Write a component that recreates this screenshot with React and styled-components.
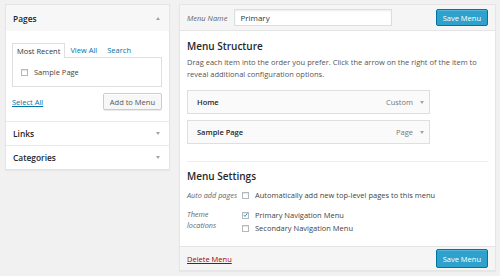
import React from "react";
import styled, { createGlobalStyle } from "styled-components";

const Global = createGlobalStyle`
  html, body { margin: 0; padding: 0; background: #f1f1f1; }
  body { font-family: "Open Sans", "Noto Sans", sans-serif; color: #444; }
  * { box-sizing: border-box; }
`;

const Page = styled.div`
  display: flex;
  align-items: flex-start;
  gap: 9px;
  padding: 4px 4px 0 5px;
  width: 500px;
  height: 276px;
`;

const Side = styled.div`
  width: 165px;
  background: #fff;
  border: 1px solid #e5e5e5;
  box-shadow: 0 1px 1px rgba(0, 0, 0, 0.04);
`;

const SectionHead = styled.div`
  height: ${(p) => (p.$open ? 26 : 24)}px;
  display: flex;
  align-items: center;
  justify-content: space-between;
  padding: 0 9px 0 7px;
  background: ${(p) => (p.$open ? "#f7f7f7" : "#fff")};
  border-top: ${(p) => (p.$first ? "none" : "1px solid #eaeaea")};
  font-size: 8.4px;
  font-weight: 600;
  color: #23282d;
`;

const Tri = styled.span`
  width: 0;
  height: 0;
  border-left: 2.5px solid transparent;
  border-right: 2.5px solid transparent;
  ${(p) =>
    p.$up
      ? "border-bottom: 3px solid #a0a5aa;"
      : "border-top: 3px solid #a0a5aa;"}
`;

const SectionBody = styled.div`
  padding: 12px 7px 11px 6px;
`;

const Tabs = styled.div`
  display: flex;
  align-items: flex-end;
  height: 14px;
  font-size: 7.5px;
`;

const Tab = styled.div`
  height: ${(p) => (p.$active ? 15 : 14)}px;
  display: flex;
  align-items: center;
  padding: 0 ${(p) => (p.$active ? 4 : 5)}px;
  color: ${(p) => (p.$active ? "#32373c" : "#0073aa")};
  background: ${(p) => (p.$active ? "#fff" : "transparent")};
  border: ${(p) => (p.$active ? "1px solid #dfdfdf" : "none")};
  border-bottom: none;
  margin-bottom: ${(p) => (p.$active ? -1 : 0)}px;
  position: relative;
  z-index: 1;
`;

const TabPanel = styled.div`
  height: 30px;
  border: 1px solid #dfdfdf;
  display: flex;
  align-items: center;
  padding-left: 8px;
  gap: 6px;
  font-size: 7.5px;
  color: #444;
`;

const Box = styled.span`
  width: 7px;
  height: 7px;
  flex: none;
  border: 1px solid #b4b9be;
  background: #fff;
  box-shadow: inset 0 1px 1px rgba(0, 0, 0, 0.1);
  display: inline-flex;
  align-items: center;
  justify-content: center;
`;

const ActionRow = styled.div`
  margin-top: 6px;
  height: 17px;
  display: flex;
  align-items: center;
  justify-content: space-between;
`;

const LinkText = styled.span`
  font-size: 7.5px;
  color: ${(p) => p.$color || "#0073aa"};
  text-decoration: underline;
`;

const Button = styled.button`
  font-family: inherit;
  font-size: 7.5px;
  height: ${(p) => p.$h || 17}px;
  padding: 0 ${(p) => p.$px || 5}px;
  border-radius: 2px;
  cursor: pointer;
  color: ${(p) => (p.$primary ? "#fff" : "#555")};
  background: ${(p) => (p.$primary ? "#2ea2cc" : "#f7f7f7")};
  border: 1px solid ${(p) => (p.$primary ? "#0074a2" : "#cccccc")};
  box-shadow: ${(p) =>
    p.$primary
      ? "inset 0 1px 0 rgba(120,200,230,.5)"
      : "inset 0 1px 0 #fff, 0 1px 0 rgba(0,0,0,.08)"};
`;

const Main = styled.div`
  width: 317px;
  background: #fff;
  border: 1px solid #e5e5e5;
  box-shadow: 0 1px 1px rgba(0, 0, 0, 0.04);
`;

const TopBar = styled.div`
  height: 26px;
  background: #f5f5f5;
  border-bottom: 1px solid #e5e5e5;
  display: flex;
  align-items: center;
  padding: 0 7px;
`;

const Label = styled.span`
  font-size: 7.5px;
  font-style: italic;
  color: #666;
`;

const NameInput = styled.div`
  margin-left: 7px;
  width: 158px;
  height: 17px;
  border: 1px solid #ddd;
  background: #fff;
  box-shadow: inset 0 1px 2px rgba(0, 0, 0, 0.07);
  display: flex;
  align-items: center;
  padding-left: 5px;
  font-size: 8px;
  color: #32373c;
`;

const Spacer = styled.div`
  flex: 1;
`;

const Body = styled.div`
  padding: 0 7px 12px;
`;

const Heading = styled.div`
  margin-top: ${(p) => p.$mt}px;
  font-size: 10px;
  line-height: 12px;
  font-weight: 600;
  color: #23282d;
`;

const Desc = styled.p`
  margin: 4px 0 0;
  font-size: 7.5px;
  line-height: 12px;
  color: #555;
`;

const Items = styled.div`
  margin-top: 10px;
  width: 243px;
  display: flex;
  flex-direction: column;
  gap: 6px;
`;

const Item = styled.div`
  height: 24px;
  border: 1px solid #dfdfdf;
  background: #fafafa;
  display: flex;
  align-items: center;
  padding: 0 5px 0 9px;
  font-size: 7.5px;
`;

const ItemTitle = styled.span`
  font-weight: 600;
  color: #23282d;
  flex: 1;
`;

const ItemType = styled.span`
  color: #777;
  margin-right: 7px;
`;

const Divider = styled.div`
  margin-top: 17px;
  height: 1px;
  background: #eee;
`;

const SettingRow = styled.div`
  margin-top: ${(p) => p.$mt || 7}px;
  display: grid;
  grid-template-columns: 55px 1fr;
  font-size: 7.5px;
`;

const SetLabel = styled.div`
  font-style: italic;
  color: #666;
  font-size: 7.3px;
  line-height: ${(p) => p.$lh || 12}px;
`;

const Options = styled.div`
  display: flex;
  flex-direction: column;
  gap: ${(p) => p.$gap || 0}px;
`;

const Option = styled.div`
  height: ${(p) => p.$h || 12}px;
  display: flex;
  align-items: center;
  gap: 6px;
  color: #444;
`;

const Footer = styled.div`
  height: 24px;
  border-top: 1px solid #e5e5e5;
  background: #f5f5f5;
  display: flex;
  align-items: center;
  justify-content: space-between;
  padding: 0 7px;
`;

const Check = () => (
  <svg width="7" height="6" viewBox="0 0 7 6">
    <path d="M1 3 L2.8 5 L6 0.8" fill="none" stroke="#1e8cbe" strokeWidth="1.3" />
  </svg>
);

export default function App() {
  return (
    <>
      <Global />
      <Page>
        <Side>
          <SectionHead $open $first>
            Pages <Tri $up />
          </SectionHead>
          <SectionBody>
            <Tabs>
              <Tab $active>Most Recent</Tab>
              <Tab>View All</Tab>
              <Tab>Search</Tab>
            </Tabs>
            <TabPanel>
              <Box />
              Sample Page
            </TabPanel>
            <ActionRow>
              <LinkText>Select All</LinkText>
              <Button $px={6}>Add to Menu</Button>
            </ActionRow>
          </SectionBody>
          <SectionHead>
            Links <Tri />
          </SectionHead>
          <SectionHead>
            Categories <Tri />
          </SectionHead>
        </Side>
        <Main>
          <TopBar>
            <Label>Menu Name</Label>
            <NameInput>Primary</NameInput>
            <Spacer />
            <Button $primary $h={17} $px={6}>Save Menu</Button>
          </TopBar>
          <Body>
            <Heading $mt={9}>Menu Structure</Heading>
            <Desc>
              Drag each item into the order you prefer. Click the arrow on the right of the item to
              reveal additional configuration options.
            </Desc>
            <Items>
              <Item>
                <ItemTitle>Home</ItemTitle>
                <ItemType>Custom</ItemType>
                <Tri />
              </Item>
              <Item>
                <ItemTitle>Sample Page</ItemTitle>
                <ItemType>Page</ItemType>
                <Tri />
              </Item>
            </Items>
            <Divider />
            <Heading $mt={8}>Menu Settings</Heading>
            <SettingRow>
              <SetLabel>Auto add pages</SetLabel>
              <Options>
                <Option>
                  <Box />
                  Automatically add new top-level pages to this menu
                </Option>
              </Options>
            </SettingRow>
            <SettingRow $mt={8}>
              <SetLabel $lh={11}>
                Theme
                <br />
                locations
              </SetLabel>
              <Options $gap={1}>
                <Option>
                  <Box>
                    <Check />
                  </Box>
                  Primary Navigation Menu
                </Option>
                <Option>
                  <Box />
                  Secondary Navigation Menu
                </Option>
              </Options>
            </SettingRow>
          </Body>
          <Footer>
            <LinkText $color="#a00">Delete Menu</LinkText>
            <Button $primary $h={19} $px={6}>Save Menu</Button>
          </Footer>
        </Main>
      </Page>
    </>
  );
}
